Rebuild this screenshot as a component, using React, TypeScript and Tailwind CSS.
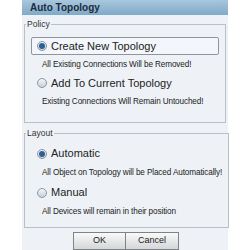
import React from "react";

const Radio = ({ checked }: { checked?: boolean }) => (
  <span className="w-[10px] h-[10px] rounded-full border border-[#8a97a6] bg-gradient-to-b from-[#f4f6f8] to-[#c9d0d8] flex items-center justify-center shrink-0">
    {checked && <span className="w-[6px] h-[6px] rounded-full bg-[#2f5f97]" />}
  </span>
);

const Option = ({
  label,
  note,
  checked,
  boxed,
}: {
  label: string;
  note: string;
  checked?: boolean;
  boxed?: boolean;
}) => (
  <div className="flex flex-col">
    <div
      className={
        "flex items-center gap-[4px] h-[18px] pl-[5px] " +
        (boxed ? "border border-[#8f959b] rounded-[2px] bg-[#f3f6fa]" : "border border-transparent")
      }
    >
      <Radio checked={checked} />
      <span className="text-[11px] text-[#222]">{label}</span>
    </div>
    <div className="text-[8.2px] tracking-[-0.12px] text-[#222] pl-[11px] h-[19px] pt-[1px] flex items-center whitespace-nowrap">
      {note}
    </div>
  </div>
);

export default function App() {
  return (
    <div className="w-[250px] h-[250px] bg-white overflow-hidden" style={{ fontFamily: '"Liberation Sans", Arial, sans-serif' }}>
      <div className="ml-[22px] w-[206px] h-[250px] bg-[#eef2f7] flex flex-col">
        <div className="h-[15px] bg-gradient-to-b from-[#a9c6dc] to-[#7faaca] flex items-center justify-between pl-[8px] pr-[4px]">
          <span className="text-[10px] font-bold text-[#1d2c3c]">Auto Topology</span>
          <span className="text-[9px] text-[#9bb7cc]">×</span>
        </div>
        <fieldset className="mx-[2px] mt-[3px] border border-[#b9bfc6] px-[6px] pb-[2px] h-[107px]">
          <legend className="text-[8.5px] text-[#333] px-[1px] ml-[-5px]">Policy</legend>
          <div className="mt-[6px]">
            <Option label="Create New Topology" note="All Existing Connections Will be Removed!" checked boxed />
            <Option label="Add To Current Topology" note="Existing Connections Will Remain Untouched!" />
          </div>
        </fieldset>
        <fieldset className="mx-[2px] mt-[4px] border border-[#b9bfc6] px-[6px] h-[103px]">
          <legend className="text-[8.5px] text-[#333] px-[1px] ml-[-5px]">Layout</legend>
          <div className="mt-[5px]">
            <Option label="Automatic" note="All Object on Topology will be Placed Automatically!" checked />
            <div className="h-[2px]" />
            <Option label="Manual" note="All Devices will remain in their position" />
          </div>
        </fieldset>
        <div className="flex justify-center mt-[4px] pl-[2px]">
          <button className="w-[53px] h-[18px] border border-[#7d8389] bg-gradient-to-b from-[#fafafa] to-[#d4d6d8] text-[9px] text-[#222]">
            OK
          </button>
          <button className="w-[53px] h-[18px] border border-[#7d8389] border-l-0 bg-gradient-to-b from-[#fafafa] to-[#d4d6d8] text-[9px] text-[#222]">
            Cancel
          </button>
        </div>
      </div>
    </div>
  );
}
